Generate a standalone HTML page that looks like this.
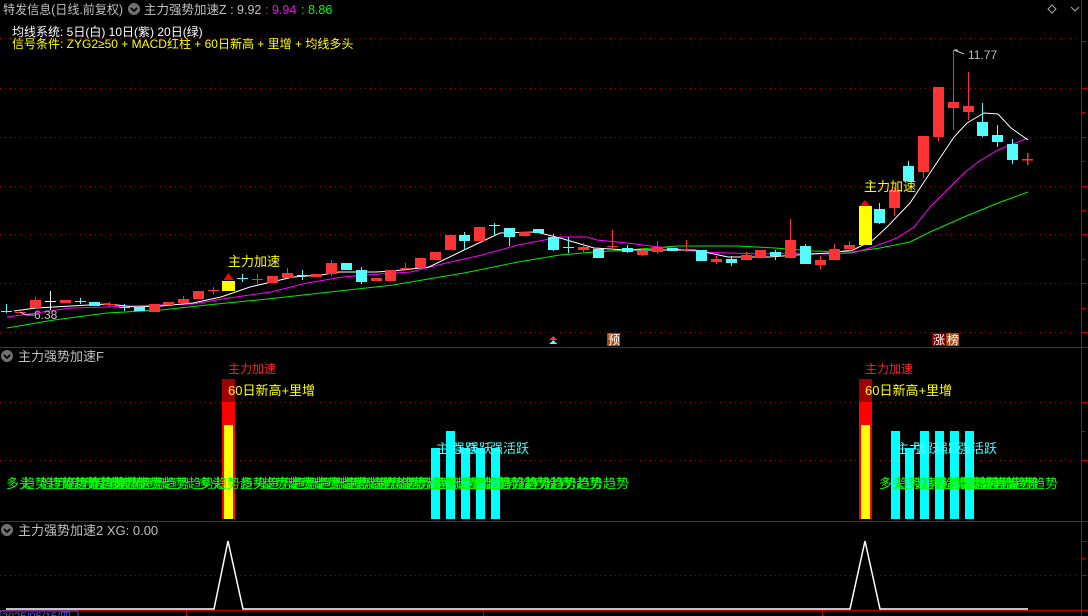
<!DOCTYPE html>
<html><head><meta charset="utf-8"><style>
html,body{margin:0;padding:0;background:#000;width:1088px;height:616px;overflow:hidden}
svg{display:block;font-family:"Liberation Sans","Noto Sans CJK SC",sans-serif}
.r{fill:#ff3333;stroke:#ff3333}.c{fill:#54fcfc;stroke:#54fcfc}
.rl{stroke:#ff3333}.cl{stroke:#54fcfc}
.g{stroke:#a00000;stroke-dasharray:1 4;stroke-width:1}
</style></head><body>
<svg width="1088" height="616" viewBox="0 0 1088 616" shape-rendering="crispEdges">
<g class="g">
<line x1="0" y1="38.5" x2="1080" y2="38.5"/><line x1="0" y1="88.5" x2="1080" y2="88.5"/>
<line x1="0" y1="137.5" x2="1080" y2="137.5"/><line x1="0" y1="186.5" x2="1080" y2="186.5"/>
<line x1="0" y1="234.5" x2="1080" y2="234.5"/><line x1="0" y1="283.5" x2="1080" y2="283.5"/>
<line x1="0" y1="332.5" x2="1080" y2="332.5"/>
<line x1="0" y1="402.5" x2="1080" y2="402.5"/><line x1="0" y1="460.5" x2="1080" y2="460.5"/>
<line x1="0" y1="575.5" x2="1080" y2="575.5"/>
</g>
<g stroke="#c00000" stroke-width="1">
<line x1="0" y1="347.5" x2="1088" y2="347.5"/>
<line x1="0" y1="521.5" x2="1088" y2="521.5"/>
<line x1="0" y1="610.5" x2="1088" y2="610.5"/>
<line x1="1081.5" y1="0" x2="1081.5" y2="616"/>
<line x1="1081" y1="41.5" x2="1087" y2="41.5"/><line x1="1081" y1="88.5" x2="1087" y2="88.5"/>
<line x1="1081" y1="112.5" x2="1085" y2="112.5"/><line x1="1081" y1="137.5" x2="1087" y2="137.5"/>
<line x1="1081" y1="161.5" x2="1085" y2="161.5"/><line x1="1081" y1="186.5" x2="1087" y2="186.5"/>
<line x1="1081" y1="210.5" x2="1085" y2="210.5"/><line x1="1081" y1="234.5" x2="1087" y2="234.5"/>
<line x1="1081" y1="259.5" x2="1085" y2="259.5"/><line x1="1081" y1="283.5" x2="1087" y2="283.5"/>
<line x1="1081" y1="308.5" x2="1085" y2="308.5"/><line x1="1081" y1="332.5" x2="1087" y2="332.5"/>
<line x1="1081" y1="402.5" x2="1087" y2="402.5"/><line x1="1081" y1="431.5" x2="1085" y2="431.5"/>
<line x1="1081" y1="460.5" x2="1087" y2="460.5"/>
<line x1="1081" y1="541.5" x2="1087" y2="541.5"/><line x1="1081" y1="558.5" x2="1085" y2="558.5"/>
<line x1="1081" y1="575.5" x2="1087" y2="575.5"/>
<line x1="186.5" y1="610" x2="186.5" y2="616"/><line x1="483.5" y1="610" x2="483.5" y2="616"/>
<line x1="822.5" y1="610" x2="822.5" y2="616"/>
</g>
<text x="3" y="14" font-size="12.5" fill="#c0c0c0" textLength="120" lengthAdjust="spacingAndGlyphs">特发信息(日线.前复权)</text>
<circle cx="134" cy="9" r="6" fill="#707070"/><path d="M131 8l3 3 3-3" stroke="#000" fill="none" stroke-width="1.5"/>
<text x="144" y="14" font-size="12.5" fill="#c0c0c0">主力强势加速Z : 9.92</text>
<text x="265" y="14" font-size="12.5" fill="#ff00ff">: 9.94</text>
<text x="301" y="14" font-size="12.5" fill="#00ff00">: 8.86</text>
<path d="M1052 5l4 4-4 4-4-4z" stroke="#aaa" fill="none" shape-rendering="auto"/>
<path d="M1071 7l4 4 4-4" stroke="#aaa" fill="none" shape-rendering="auto"/>
<text x="12" y="36" font-size="12" fill="#ffffff">均线系统: 5日(白) 10日(紫) 20日(绿)</text>
<text x="12" y="48" font-size="12" fill="#ffff00">信号条件: ZYG2≥50 + MACD红柱 + 60日新高 + 里增 + 均线多头</text>
<g fill="none" stroke-width="1" shape-rendering="auto">
<polyline stroke="#00ee00" points="7,328 54,320 107,313 161,310 207,305 268,299 321,293 393,285 464,273 518,262 560,255 594,252 627,250 678,246 738,246 775,248 812,251 853,252 880,248 910,242 930,232 964,217 998,203 1028,192"/>
<polyline stroke="#ff00ff" points="7,317 36,313 71,308 107,307 157,305 193,304 229,298 271,292 307,283 343,277 379,274 411,272 446,263 482,255 518,245 560,237 587,237 597,240 627,243 651,246 678,249 701,252 728,253 762,254 796,253 829,254 853,253 873,247 897,238 914,227 930,207 947,190 964,173 981,160 998,150 1028,138"/>
<polyline stroke="#ffffff" points="14,311 36,308 71,306 107,304 136,307 161,306 193,303 221,297 250,287 293,277 321,275 339,272 375,272 393,271 429,267 464,250 500,233 536,232 560,238 594,248 627,250 661,250 695,250 728,257 769,257 796,255 829,253 853,250 873,240 887,227 910,203 930,173 954,137 967,123 984,113 998,114 1011,128 1028,140"/>
</g>
<g stroke-width="1">
<line class="cl" x1="6.5" y1="304" x2="6.5" y2="313"/><line class="cl" x1="1" y1="311.5" x2="12" y2="311.5"/>
<line class="rl" x1="15" y1="312.5" x2="26" y2="312.5"/>
<line class="rl" x1="35.5" y1="297" x2="35.5" y2="309"/><rect class="r" x="30.5" y="300.5" width="10" height="7"/>
<line x1="50.5" y1="291" x2="50.5" y2="310" stroke="#fff"/><line x1="45" y1="301.5" x2="56" y2="301.5" stroke="#fff"/>
<rect class="r" x="60.5" y="300.5" width="10" height="2"/>
<line class="cl" x1="75" y1="301.5" x2="86" y2="301.5"/><line class="cl" x1="80.5" y1="298" x2="80.5" y2="304"/>
<rect class="c" x="89.5" y="302.5" width="10" height="3"/>
<line class="rl" x1="104" y1="304.5" x2="115" y2="304.5"/><line class="rl" x1="109.5" y1="302" x2="109.5" y2="307"/>
<line class="cl" x1="119" y1="307.5" x2="130" y2="307.5"/><line class="cl" x1="124.5" y1="304" x2="124.5" y2="311"/>
<rect class="c" x="134.5" y="307.5" width="10" height="3"/>
<rect class="r" x="149.5" y="304.5" width="10" height="7"/>
<rect class="r" x="163.5" y="302.5" width="10" height="2"/>
<line class="rl" x1="183.5" y1="296" x2="183.5" y2="303"/><rect class="r" x="178.5" y="299.5" width="10" height="3"/>
<rect class="r" x="193.5" y="291.5" width="10" height="7"/>
<line class="rl" x1="213.5" y1="287" x2="213.5" y2="294"/><line class="rl" x1="208" y1="290.5" x2="219" y2="290.5"/>
<rect x="222" y="281" width="13" height="10" fill="#ffff00"/><path d="M228.5 273l5 7h-10z" fill="#ff0000" shape-rendering="auto"/>
<line class="cl" x1="242.5" y1="274" x2="242.5" y2="282"/><line class="cl" x1="237" y1="278.5" x2="248" y2="278.5"/>
<line class="rl" x1="257.5" y1="274" x2="257.5" y2="285"/><line class="rl" x1="252" y1="279.5" x2="263" y2="279.5"/>
<rect class="r" x="267.5" y="276.5" width="10" height="6"/>
<line class="rl" x1="287.5" y1="268" x2="287.5" y2="277"/><rect class="r" x="282.5" y="273.5" width="10" height="4"/>
<line class="cl" x1="302.5" y1="270" x2="302.5" y2="280"/><line class="cl" x1="297" y1="275.5" x2="308" y2="275.5"/>
<rect class="r" x="311.5" y="274.5" width="10" height="2"/>
<line class="rl" x1="331.5" y1="260" x2="331.5" y2="276"/><rect class="r" x="326.5" y="263.5" width="10" height="10"/>
<rect class="c" x="341.5" y="263.5" width="10" height="6"/>
<line class="cl" x1="361.5" y1="267" x2="361.5" y2="284"/><rect class="c" x="356.5" y="270.5" width="10" height="11"/>
<rect class="r" x="371.5" y="278.5" width="10" height="2"/>
<rect class="r" x="385.5" y="270.5" width="10" height="10"/>
<line class="rl" x1="405.5" y1="263" x2="405.5" y2="271"/><line class="rl" x1="400" y1="268.5" x2="411" y2="268.5"/>
<rect class="r" x="415.5" y="258.5" width="10" height="9"/>
<rect class="r" x="430.5" y="252.5" width="10" height="7"/>
<rect class="r" x="445.5" y="235.5" width="10" height="14"/>
<line class="cl" x1="464.5" y1="232" x2="464.5" y2="250"/><rect class="c" x="459.5" y="235.5" width="10" height="5"/>
<rect class="r" x="474.5" y="227.5" width="10" height="13"/>
<line class="cl" x1="494.5" y1="223" x2="494.5" y2="236"/><line class="cl" x1="489" y1="225.5" x2="500" y2="225.5"/>
<line class="cl" x1="509.5" y1="228" x2="509.5" y2="246"/><rect class="c" x="504.5" y="228.5" width="10" height="8"/>
<rect class="r" x="519.5" y="232.5" width="10" height="3"/>
<rect class="c" x="533.5" y="229.5" width="10" height="3"/>
<line class="cl" x1="553.5" y1="234" x2="553.5" y2="251"/><rect class="c" x="548.5" y="237.5" width="10" height="12"/>
<line class="cl" x1="568.5" y1="237" x2="568.5" y2="253"/><line class="cl" x1="563" y1="247.5" x2="574" y2="247.5"/>
<line class="rl" x1="583.5" y1="243" x2="583.5" y2="252"/><rect class="r" x="578.5" y="247.5" width="10" height="2"/>
<rect class="c" x="593.5" y="249.5" width="10" height="8"/>
<line class="rl" x1="612.5" y1="230" x2="612.5" y2="250"/><line class="rl" x1="607" y1="246.5" x2="618" y2="246.5"/>
<line class="cl" x1="627.5" y1="245" x2="627.5" y2="253"/><rect class="c" x="622.5" y="248.5" width="10" height="3"/>
<line class="rl" x1="642.5" y1="248" x2="642.5" y2="256"/><rect class="r" x="637.5" y="251.5" width="10" height="3"/>
<line class="rl" x1="657.5" y1="241" x2="657.5" y2="254"/><rect class="r" x="652.5" y="247.5" width="10" height="4"/>
<rect class="c" x="667.5" y="248.5" width="10" height="2"/>
<line class="rl" x1="686.5" y1="240" x2="686.5" y2="252"/><line class="rl" x1="681" y1="249.5" x2="692" y2="249.5"/>
<rect class="c" x="696.5" y="250.5" width="10" height="10"/>
<line class="rl" x1="716.5" y1="256" x2="716.5" y2="264"/><rect class="r" x="711.5" y="259.5" width="10" height="2"/>
<line class="cl" x1="731.5" y1="256" x2="731.5" y2="266"/><rect class="c" x="726.5" y="259.5" width="10" height="3"/>
<line class="rl" x1="746.5" y1="252" x2="746.5" y2="259"/><rect class="r" x="741.5" y="255.5" width="10" height="4"/>
<rect class="r" x="755.5" y="250.5" width="10" height="7"/>
<line class="cl" x1="775.5" y1="250" x2="775.5" y2="260"/><rect class="c" x="770.5" y="252.5" width="10" height="3"/>
<line class="rl" x1="790.5" y1="219" x2="790.5" y2="257"/><rect class="r" x="785.5" y="240.5" width="10" height="17"/>
<line class="cl" x1="805.5" y1="244" x2="805.5" y2="264"/><rect class="c" x="800.5" y="246.5" width="10" height="17"/>
<line class="rl" x1="820.5" y1="256" x2="820.5" y2="269"/><rect class="r" x="815.5" y="260.5" width="10" height="4"/>
<line class="rl" x1="834.5" y1="244" x2="834.5" y2="259"/><rect class="r" x="829.5" y="249.5" width="10" height="10"/>
<line class="rl" x1="849.5" y1="241" x2="849.5" y2="252"/><rect class="r" x="844.5" y="245.5" width="10" height="3"/>
<rect x="859" y="206" width="13" height="39" fill="#ffff00"/><path d="M865 200l5 6h-10z" fill="#ff0000" shape-rendering="auto"/>
<line class="cl" x1="879.5" y1="203" x2="879.5" y2="224"/><rect class="c" x="874.5" y="209.5" width="10" height="13"/>
<line class="rl" x1="894.5" y1="187" x2="894.5" y2="216"/><rect class="r" x="889.5" y="190.5" width="10" height="17"/>
<line class="cl" x1="908.5" y1="161" x2="908.5" y2="180"/><rect class="c" x="903.5" y="166.5" width="10" height="14"/>
<line class="rl" x1="923.5" y1="136" x2="923.5" y2="178"/><rect class="r" x="918.5" y="136.5" width="10" height="35"/>
<line class="rl" x1="938.5" y1="87" x2="938.5" y2="141"/><rect class="r" x="933.5" y="87.5" width="10" height="49"/>
<line class="rl" x1="953.5" y1="50" x2="953.5" y2="130"/><rect class="r" x="948.5" y="102.5" width="10" height="5"/>
<line class="rl" x1="968.5" y1="72" x2="968.5" y2="120"/><rect class="r" x="963.5" y="106.5" width="10" height="5"/>
<line class="cl" x1="982.5" y1="103" x2="982.5" y2="137"/><rect class="c" x="977.5" y="122.5" width="10" height="13"/>
<line class="cl" x1="997.5" y1="125" x2="997.5" y2="147"/><rect class="c" x="992.5" y="135.5" width="10" height="6"/>
<line class="cl" x1="1012.5" y1="139" x2="1012.5" y2="164"/><rect class="c" x="1007.5" y="144.5" width="10" height="15"/>
<line x1="1027.5" y1="153" x2="1027.5" y2="165" stroke="#ff3333" stroke-width="1.5"/><line x1="1022" y1="159.5" x2="1033" y2="159.5" stroke="#ff3333" stroke-width="1.5"/>
</g>
<path d="M954 50h4M954 50l10 4" stroke="#ccc" fill="none" shape-rendering="auto"/>
<text x="968" y="59" font-size="12" fill="#c0c0c0">11.77</text>
<path d="M20 312l6 3h8" stroke="#ccc" fill="none" shape-rendering="auto"/>
<text x="34" y="319" font-size="12" fill="#c0c0c0">6.38</text>
<text x="228" y="266" font-size="13" fill="#ffff00">主力加速</text>
<text x="864" y="191" font-size="13" fill="#ffff00">主力加速</text>
<path d="M553 336l4 4h-8z" fill="#ff3333"/><path d="M553 340l4 4h-8z" fill="#54fcfc"/>
<rect x="607" y="333" width="13" height="13" fill="#a84a10"/><text x="608" y="344" font-size="12" fill="#fff">预</text>
<rect x="932" y="333" width="13" height="13" fill="#800000"/><text x="933" y="344" font-size="12" fill="#fff">涨</text>
<rect x="946" y="333" width="13" height="13" fill="#a84a10"/><text x="947" y="344" font-size="12" fill="#fff">榜</text>
<circle cx="7" cy="356" r="6" fill="#707070"/><path d="M4 355l3 3 3-3" stroke="#000" fill="none" stroke-width="1.5"/>
<text x="18" y="361" font-size="13" fill="#c0c0c0">主力强势加速F</text>
<g>
<rect x="222" y="379" width="13" height="23" fill="#a00000"/><rect x="222" y="402" width="13" height="117" fill="#ff0000"/><rect x="224" y="425" width="9" height="94" fill="#ffff00"/>
<rect x="859" y="379" width="13" height="23" fill="#a00000"/><rect x="859" y="402" width="13" height="117" fill="#ff0000"/><rect x="861" y="425" width="9" height="94" fill="#ffff00"/>
<g fill="#00ffff">
<rect x="431" y="448" width="9" height="71"/><rect x="446" y="431" width="9" height="88"/><rect x="461" y="448" width="9" height="71"/><rect x="476" y="448" width="9" height="71"/><rect x="491" y="448" width="9" height="71"/>
<rect x="891" y="431" width="9" height="88"/><rect x="905" y="448" width="9" height="71"/><rect x="920" y="431" width="9" height="88"/><rect x="935" y="431" width="9" height="88"/><rect x="950" y="431" width="9" height="88"/><rect x="965" y="431" width="9" height="88"/>
</g>
</g>
<g font-size="13">
<text x="228" y="373" fill="#ff2020" font-size="12">主力加速</text>
<text x="865" y="373" fill="#ff2020" font-size="12">主力加速</text>
<text x="228" y="395" fill="#ffff00">60日新高+里增</text>
<text x="865" y="395" fill="#ffff00">60日新高+里增</text>
<g fill="#40ffff"><text x="436" y="453">主力</text><text x="452" y="453">强跃</text><text x="466" y="453">强跃</text><text x="490" y="453">强活跃</text>
<text x="896" y="453">主力</text><text x="914" y="453">强跃</text><text x="935" y="453">强跃</text><text x="958" y="453">强活跃</text></g>
<g fill="#00ff00">
<text x="6" y="488">多头</text><text x="22" y="488">趋势趋势趋势趋势</text><text x="40" y="488">趋势趋势趋势趋势</text><text x="62" y="488">趋势趋势趋势趋势</text><text x="86" y="488">势趋势趋势势趋势</text><text x="110" y="488">趋势趋势趋势趋势</text>
<text x="198" y="488">多头</text><text x="214" y="488">趋势多头趋势趋势</text><text x="240" y="488">趋势趋势趋势趋势</text><text x="262" y="488">趋势趋势趋势趋势</text><text x="290" y="488">趋势趋势趋势趋势</text><text x="318" y="488">趋势趋势趋势趋势</text><text x="348" y="488">趋势趋势趋势趋势</text><text x="378" y="488">趋势趋势多头趋势</text><text x="406" y="488">趋势趋势趋势趋势</text><text x="434" y="488">趋势趋势趋势趋势</text><text x="466" y="488">趋势趋势趋势趋势</text><text x="498" y="488">趋势趋势趋势趋势</text><text x="525" y="488">趋势趋势趋势趋势</text>
<text x="879" y="488">多头</text><text x="895" y="488">趋势趋势趋势趋势</text><text x="915" y="488">趋势趋势趋势趋势</text><text x="935" y="488">趋势趋势趋势趋势</text><text x="958" y="488">趋势趋势趋势</text><text x="980" y="488">趋势趋势趋势</text>
</g>
</g>
<circle cx="7" cy="530" r="6" fill="#707070"/><path d="M4 529l3 3 3-3" stroke="#000" fill="none" stroke-width="1.5"/>
<text x="18" y="535" font-size="13" fill="#c0c0c0">主力强势加速2 XG: 0.00</text>
<polyline points="6,609 214,609 228,541 243,609 850,609 865,541 880,609 1028,609" fill="none" stroke="#fff" stroke-width="1.5" shape-rendering="auto"/>
<rect x="0" y="611" width="78" height="6" fill="#000" stroke="#4060ff"/>
<text x="2" y="620" font-size="11" fill="#4060ff">2025/05/15/四</text>
</svg>
</body></html>
